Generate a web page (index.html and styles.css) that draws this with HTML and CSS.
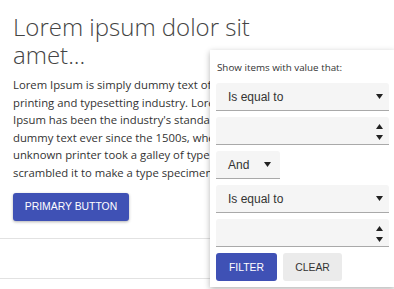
FILE: index.html
```html
<!DOCTYPE html>
<html>
<head>
<meta charset="utf-8">
<link rel="stylesheet" href="styles.css">
</head>
<body>
<main class="page">
  <h1 class="title">Lorem ipsum dolor sit amet...</h1>
  <p class="lead">Lorem Ipsum is simply dummy text of the printing and typesetting industry. Lorem Ipsum has been the industry's standard dummy text ever since the 1500s, when an unknown printer took a galley of type and scrambled it to make a type specimen book.</p>
  <button class="btn-primary">PRIMARY BUTTON</button>
  <div class="grid-row"></div>
</main>

<div class="filter-menu">
  <div class="filter-label">Show items with value that:</div>
  <div class="field select">
    <span>Is equal to</span>
    <svg class="caret" width="7" height="5" viewBox="0 0 7 5"><path d="M0 0H7L3.5 5Z" fill="#222"/></svg>
  </div>
  <div class="field numeric">
    <span class="spin">
      <svg width="7" height="5" viewBox="0 0 7 5"><path d="M0 5H7L3.5 0Z" fill="#222"/></svg>
      <svg width="7" height="5" viewBox="0 0 7 5"><path d="M0 0H7L3.5 5Z" fill="#222"/></svg>
    </span>
  </div>
  <div class="field select logic">
    <span>And</span>
    <svg class="caret" width="7" height="5" viewBox="0 0 7 5"><path d="M0 0H7L3.5 5Z" fill="#222"/></svg>
  </div>
  <div class="field select">
    <span>Is equal to</span>
    <svg class="caret" width="7" height="5" viewBox="0 0 7 5"><path d="M0 0H7L3.5 5Z" fill="#222"/></svg>
  </div>
  <div class="field numeric">
    <span class="spin">
      <svg width="7" height="5" viewBox="0 0 7 5"><path d="M0 5H7L3.5 0Z" fill="#222"/></svg>
      <svg width="7" height="5" viewBox="0 0 7 5"><path d="M0 0H7L3.5 5Z" fill="#222"/></svg>
    </span>
  </div>
  <div class="actions">
    <button class="btn btn-filter">FILTER</button>
    <button class="btn btn-clear">CLEAR</button>
  </div>
</div>
</body>
</html>
```

FILE: styles.css
```css
html, body {
  margin: 0;
  padding: 0;
  background: #fff;
}
body {
  width: 394px;
  height: 289px;
  overflow: hidden;
  position: relative;
}
.page {
  padding: 13px 0 0 0;
}
.title {
  margin: 0 0 0 13px;
  width: 290px;
  font-family: "Open Sans", "Noto Sans", sans-serif;
  font-weight: 300;
  font-size: 24px;
  line-height: 28px;
  color: #444;
}
.lead {
  margin: 7px 0 0 13px;
  width: 240px;
  font-family: "Open Sans", "Noto Sans", sans-serif;
  font-size: 11.3px;
  line-height: 17.6px;
  color: #333;
}
.btn-primary {
  margin: 11px 0 0 13px;
  display: block;
  width: 116px;
  height: 28px;
  border: 0;
  border-radius: 3px;
  background: #3f51b5;
  color: #fff;
  font-family: "Liberation Sans", Arial, sans-serif;
  font-size: 10.4px;
  padding: 0;
  box-shadow: 0 1px 3px rgba(0,0,0,0.3);
}
.grid-row {
  margin-top: 17px;
  height: 39px;
  border-top: 1px solid #e2e2e2;
  border-bottom: 1px solid #e2e2e2;
}
.filter-menu {
  position: absolute;
  left: 210px;
  top: 50px;
  width: 173px;
  padding: 10px 6px 6px 6px;
  background: #fff;
  box-shadow: 0 2px 6px rgba(0,0,0,0.3);
  display: flex;
  flex-direction: column;
  gap: 6px;
}
.filter-label {
  font-family: "Open Sans", "Noto Sans", sans-serif;
  font-size: 9.8px;
  color: #333;
  padding-left: 1px;
  height: 17px;
  line-height: 16px;
}
.field {
  box-sizing: border-box;
  height: 28px;
  background: #f5f5f5;
  border-bottom: 1px solid #a9a9a9;
  border-radius: 3px 3px 0 0;
  display: flex;
  align-items: center;
  justify-content: space-between;
  padding: 0 6px 0 12px;
  font-family: "Liberation Sans", Arial, sans-serif;
  font-size: 12px;
  color: #333;
}
.field.numeric {
  justify-content: flex-end;
}
.spin {
  display: flex;
  flex-direction: column;
  gap: 6px;
  padding-top: 2px;
}
.spin svg, .caret {
  display: block;
}
.logic {
  width: 64px;
  padding-right: 9px;
}
.actions {
  display: flex;
  gap: 6px;
}
.btn {
  height: 28px;
  border: 0;
  border-radius: 3px;
  font-family: "Liberation Sans", Arial, sans-serif;
  font-size: 10.4px;
  padding: 0;
}
.btn-filter {
  width: 61px;
  background: #3f51b5;
  color: #fff;
}
.btn-clear {
  width: 59px;
  background: #ebebeb;
  color: #333;
}
```
